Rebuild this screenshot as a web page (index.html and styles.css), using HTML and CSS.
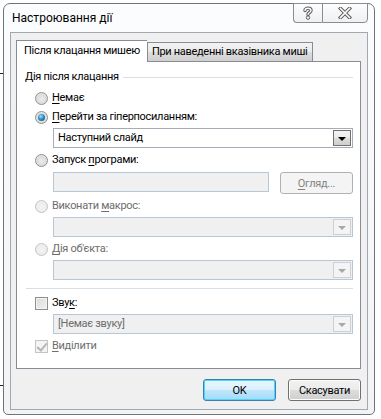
FILE: index.html
```html
<!DOCTYPE html>
<html lang="uk">
<head>
    <meta charset="UTF-8">
    <title>Настроювання дії</title>
    <link rel="stylesheet" href="styles.css">
</head>
<body>
    <div class="window">
        <div class="titlebar">
            <span class="title">Настроювання дії</span>
            <div class="caption">
                <span class="cap-btn cap-help">
                    <svg width="12" height="14" viewBox="0 0 12 14">
                        <path d="M3 4.5 C3 1.5 9 1.5 9 4.5 C9 6.5 6 6.5 6 8.5" fill="none" stroke="#5a5a5a" stroke-width="3.4" stroke-linecap="round"/>
                        <path d="M3 4.5 C3 1.5 9 1.5 9 4.5 C9 6.5 6 6.5 6 8.5" fill="none" stroke="#fff" stroke-width="1.4" stroke-linecap="round"/>
                        <circle cx="6" cy="11.6" r="1.7" fill="#fff" stroke="#5a5a5a" stroke-width="1"/>
                    </svg>
                </span>
                <span class="cap-btn cap-close">
                    <svg width="14" height="12" viewBox="0 0 14 12">
                        <path d="M2.5 1.5 L11.5 10.5 M11.5 1.5 L2.5 10.5" stroke="#5a5a5a" stroke-width="3.6" stroke-linecap="square"/>
                        <path d="M2.5 1.5 L11.5 10.5 M11.5 1.5 L2.5 10.5" stroke="#fff" stroke-width="1.6" stroke-linecap="square"/>
                    </svg>
                </span>
            </div>
        </div>

        <div class="client">
            <div class="tabs">
                <div class="tab tab-active">Після клацання мишею</div>
                <div class="tab">При наведенні вказівника миші</div>
            </div>

            <div class="panel">
                <div class="group-head">
                    <span>Дія після клацання</span>
                    <span class="group-line"></span>
                </div>

                <div class="opt opt-first"><span class="radio"></span><span><u>Н</u>емає</span></div>
                <div class="opt"><span class="radio radio-on"></span><span><u>П</u>ерейти за гіперпосиланням:</span></div>
                <div class="combo">
                    <span class="combo-text">Наступний слайд</span>
                    <span class="combo-arrow"></span>
                </div>

                <div class="opt"><span class="radio"></span><span>Запуск <u>п</u>рограми:</span></div>
                <div class="field-row">
                    <span class="edit"></span>
                    <span class="btn btn-off"><u>О</u>гляд...</span>
                </div>

                <div class="opt opt-off"><span class="radio"></span><span>Виконати <u>м</u>акрос:</span></div>
                <div class="combo combo-off">
                    <span class="combo-text"></span>
                    <span class="combo-arrow"></span>
                </div>

                <div class="opt opt-off"><span class="radio"></span><span><u>Д</u>ія об'єкта:</span></div>
                <div class="combo combo-off">
                    <span class="combo-text"></span>
                    <span class="combo-arrow"></span>
                </div>

                <div class="separator"></div>

                <div class="opt opt-sound"><span class="check"></span><span>Зву<u>к</u>:</span></div>
                <div class="combo combo-off">
                    <span class="combo-text">[Немає звуку]</span>
                    <span class="combo-arrow"></span>
                </div>

                <div class="opt opt-off opt-last"><span class="check check-on"></span><span><u>В</u>иділити</span></div>
            </div>

            <div class="footer">
                <span class="btn btn-default">OK</span>
                <span class="btn">Скасувати</span>
            </div>
        </div>
    </div>
</body>
</html>
```

FILE: styles.css
```css
* {
    margin: 0;
    padding: 0;
    box-sizing: border-box;
}

body {
    background: #ffffff;
    font-family: Roboto, 'Noto Sans', sans-serif;
    font-size: 11px;
    letter-spacing: -0.3px;
    color: #000000;
    width: 381px;
    height: 419px;
    overflow: hidden;
    position: relative;
}

/* bits of the window behind the dialog */
body::before,
body::after {
    content: "";
    position: absolute;
    left: 0;
    width: 3px;
    height: 1px;
    background: #202020;
}

body::before {
    top: 73px;
}

body::after {
    top: 385px;
}

u {
    text-decoration: underline;
    text-underline-offset: 2px;
}

/* Window frame */
.window {
    margin: 3px 0 0 3px;
    width: 372px;
    height: 412px;
    border: 1px solid #6f737a;
    border-radius: 7px 7px 5px 5px;
    background: linear-gradient(180deg, #fbfcfd 0%, #f1f3f5 100%);
    display: flex;
    flex-direction: column;
}

.titlebar {
    height: 28px;
    display: flex;
    justify-content: space-between;
    align-items: flex-start;
    padding-left: 8px;
}

.title {
    margin-top: 6px;
    line-height: 16px;
    font-size: 12px;
    letter-spacing: 0;
}

.caption {
    display: flex;
    margin-right: 6px;
    margin-top: -1px;
}

.cap-btn {
    height: 20px;
    border: 1px solid #8a8e94;
    background: linear-gradient(180deg, #fdfdfd 0%, #eef0f2 100%);
    display: flex;
    align-items: center;
    justify-content: center;
}

.cap-help {
    width: 29px;
    border-radius: 0 0 0 4px;
    border-right: none;
}

.cap-close {
    width: 46px;
    border-radius: 0 0 4px 0;
}

.client {
    flex: 1;
    margin: 0 6px 4px 6px;
    border: 1px solid #a2a8b0;
    background: #f0f0f0;
    padding: 7px 0 0 5px;
    display: flex;
    flex-direction: column;
}

/* Tabs */
.tabs {
    display: flex;
    align-items: flex-end;
    height: 21px;
    position: relative;
    z-index: 1;
}

.tab {
    height: 19px;
    padding: 0 4px;
    border: 1px solid #898c95;
    border-bottom: none;
    background: linear-gradient(180deg, #f2f2f2 0%, #ebebeb 50%, #dddddd 51%, #cfcfcf 100%);
    line-height: 18px;
}

.tab-active {
    height: 22px;
    margin-bottom: -1px;
    padding: 0 7px;
    background: #ffffff;
    border-right: none;
    line-height: 20px;
}

/* Tab page */
.panel {
    width: 345px;
    height: 308px;
    border: 1px solid #898c95;
    background: #ffffff;
    padding: 8px 7px 0 8px;
}

.group-head {
    display: flex;
    align-items: center;
    height: 14px;
    line-height: 14px;
}

.group-line {
    flex: 1;
    height: 1px;
    margin-left: 4px;
    background: #d5dfe5;
}

.opt {
    display: flex;
    align-items: center;
    gap: 4px;
    height: 14px;
    margin-top: 5px;
    margin-left: 10px;
    line-height: 14px;
}

.opt-first {
    margin-top: 7px;
}

.opt-sound {
    margin-top: 7px;
}

.opt-off {
    color: #6d6d6d;
}

.radio {
    width: 13px;
    height: 13px;
    border-radius: 50%;
    border: 1px solid #8e8f8f;
    background: radial-gradient(circle at 50% 55%, #ececec 0%, #dcdcdc 55%, #f4f4f4 100%);
    position: relative;
    flex-shrink: 0;
}

.radio-on::after {
    content: "";
    position: absolute;
    left: 2px;
    top: 2px;
    width: 7px;
    height: 7px;
    border-radius: 50%;
    background: radial-gradient(circle at 40% 35%, #a6e2fb 0%, #2b8fcb 45%, #0e4c78 100%);
}

.opt-off .radio {
    border-color: #c4c4c4;
    background: radial-gradient(circle at 50% 55%, #f4f4f4 0%, #ececec 60%, #f8f8f8 100%);
}

.check {
    width: 13px;
    height: 13px;
    border: 1px solid #8e8f8f;
    background: linear-gradient(135deg, #dcdcdc 0%, #f0f0f0 100%);
    box-shadow: inset 0 0 0 1px #f4f4f4;
    position: relative;
    flex-shrink: 0;
}

.opt-off .check {
    border-color: #c4c4c4;
    background: #f4f4f4;
    box-shadow: none;
}

.check-on::after {
    content: "";
    position: absolute;
    left: 3px;
    top: 0px;
    width: 4px;
    height: 8px;
    border: solid #b6b6b6;
    border-width: 0 2px 2px 0;
    transform: rotate(40deg);
}

/* Combos and fields */
.combo {
    display: flex;
    height: 20px;
    margin: 4px 0 0 28px;
    border: 1px solid #a5acb5;
    background: #ffffff;
}

.combo-text {
    flex: 1;
    padding-left: 4px;
    line-height: 18px;
}

.combo-arrow {
    width: 18px;
    margin: 1px;
    border: 1px solid #707070;
    background: linear-gradient(180deg, #f2f2f2 0%, #ebebeb 50%, #dddddd 51%, #cfcfcf 100%);
    position: relative;
}

.combo-arrow::after {
    content: "";
    position: absolute;
    left: 4px;
    top: 6px;
    border-left: 4px solid transparent;
    border-right: 4px solid transparent;
    border-top: 4px solid #000000;
}

.combo-off {
    border-color: #b9c6d6;
    background: #f0f0f0;
}

.combo-off .combo-text {
    color: #6d6d6d;
}

.combo-off .combo-arrow {
    border-color: #c9d0d8;
    background: #f4f4f4;
}

.combo-off .combo-arrow::after {
    border-top-color: #a8a8a8;
}

.field-row {
    display: flex;
    justify-content: space-between;
    margin: 5px 0 0 28px;
}

.edit {
    width: 216px;
    height: 20px;
    border: 1px solid #b9c6d6;
    background: #f0f0f0;
}

.separator {
    height: 1px;
    margin: 8px 0 0 1px;
    background: #d5dfe5;
}

/* Buttons */
.btn {
    display: flex;
    align-items: center;
    justify-content: center;
    height: 22px;
    width: 73px;
    border: 1px solid #707070;
    border-radius: 3px;
    background: linear-gradient(180deg, #f2f2f2 0%, #ebebeb 50%, #dddddd 51%, #cfcfcf 100%);
    box-shadow: inset 0 0 0 1px #fcfcfc;
}

.btn-off {
    border-color: #adb2b5;
    background: #f4f4f4;
    box-shadow: none;
    color: #838383;
}

.btn-default {
    border-color: #3c7fb1;
    background: linear-gradient(180deg, #eaf6fd 0%, #d9f0fc 50%, #bee6fd 51%, #a7d9f5 100%);
    box-shadow: inset 0 0 0 1px #48d8fb;
}

.footer {
    display: flex;
    justify-content: flex-end;
    gap: 12px;
    padding: 10px 6px 0 0;
}
```
